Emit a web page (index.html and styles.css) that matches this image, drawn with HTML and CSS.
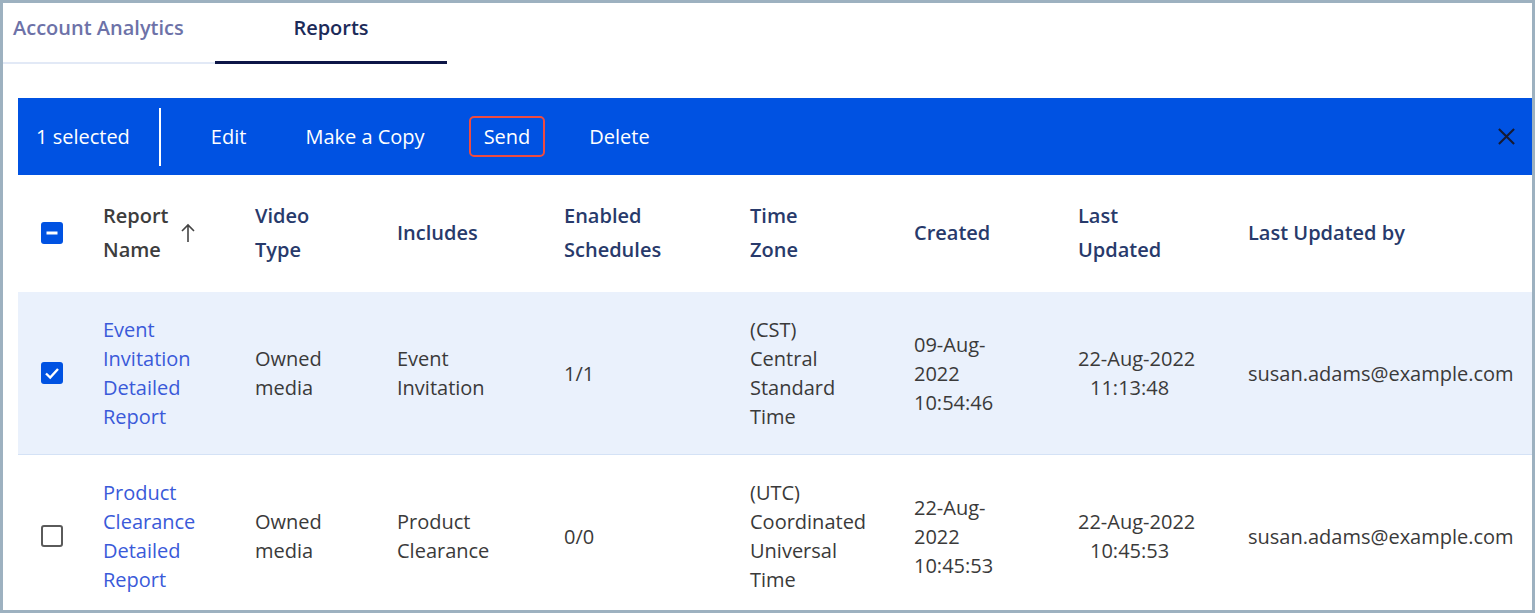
FILE: index.html
```html
<!DOCTYPE html>
<html>
  <head>
    <meta name="viewport" content="width=device-width, initial-scale=1">
    <link rel="stylesheet" href="styles.css">
  </head>
  <body>
    <div class="frame">
      <div class="tabs">
        <div class="tab tab-first">Account Analytics</div>
        <div class="tab active">Reports</div>
      </div>

      <div class="panel">
        <div class="action-bar">
          <span class="count">1 selected</span>
          <span class="divider"></span>
          <div class="bar-actions">
            <span class="bar-btn">Edit</span>
            <span class="bar-btn">Make a Copy</span>
            <span class="bar-btn focused">Send</span>
            <span class="bar-btn">Delete</span>
          </div>
          <svg class="close-btn" viewBox="0 0 20 20">
            <path d="M2 2 L18 18 M18 2 L2 18" stroke="#151a33" stroke-width="2.2" fill="none"/>
          </svg>
        </div>

        <table class="reports">
          <colgroup>
            <col style="width:85px">
            <col style="width:152px">
            <col style="width:142px">
            <col style="width:167px">
            <col style="width:186px">
            <col style="width:164px">
            <col style="width:164px">
            <col style="width:170px">
            <col>
          </colgroup>
          <thead>
            <tr>
              <th>
                <span class="checkbox on">
                  <svg viewBox="0 0 22 22"><rect x="5.5" y="9.5" width="11" height="3" fill="#fff"/></svg>
                </span>
              </th>
              <th>
                <div class="sort-head">
                  <span>Report<br>Name</span>
                  <svg class="sort-arrow" viewBox="0 0 14 20">
                    <path d="M7 2 V19 M1 8 L7 2 L13 8" stroke="#444" stroke-width="1.6" fill="none"/>
                  </svg>
                </div>
              </th>
              <th>Video<br>Type</th>
              <th>Includes</th>
              <th>Enabled<br>Schedules</th>
              <th>Time<br>Zone</th>
              <th>Created</th>
              <th>Last<br>Updated</th>
              <th>Last Updated by</th>
            </tr>
          </thead>
          <tbody>
            <tr class="selected">
              <td>
                <span class="checkbox on">
                  <svg viewBox="0 0 22 22"><path d="M5 11.5 L9.2 15.5 L17 7" stroke="#fff" stroke-width="2.4" fill="none"/></svg>
                </span>
              </td>
              <td><a href="#" class="report-link">Event Invitation Detailed Report</a></td>
              <td>Owned media</td>
              <td>Event Invitation</td>
              <td>1/1</td>
              <td>(CST) Central Standard Time</td>
              <td>09-Aug-2022 10:54:46</td>
              <td><span class="date">22-Aug-2022</span><span class="time">11:13:48</span></td>
              <td>susan.adams@example.com</td>
            </tr>
            <tr>
              <td><span class="checkbox off"></span></td>
              <td><a href="#" class="report-link">Product Clearance Detailed Report</a></td>
              <td>Owned media</td>
              <td>Product Clearance</td>
              <td>0/0</td>
              <td>(UTC) Coordinated Universal Time</td>
              <td>22-Aug-2022 10:45:53</td>
              <td><span class="date">22-Aug-2022</span><span class="time">10:45:53</span></td>
              <td>susan.adams@example.com</td>
            </tr>
          </tbody>
        </table>
      </div>
    </div>
  </body>
</html>
```

FILE: styles.css
```css
body {
  margin: 0;
  font-family: "Open Sans", sans-serif;
  color: #3a3a3a;
  background: #fff;
}

.frame {
  height: 613px;
  box-sizing: border-box;
  border: 3px solid #9db1c0;
  overflow: hidden;
}

/* tabs */
.tabs {
  display: flex;
  align-items: flex-end;
}

.tab {
  font-size: 20px;
  font-weight: 600;
  line-height: 28px;
  padding: 11px 0 19px;
  border-bottom: 3px solid transparent;
  color: #6d72a8;
}

.tab-first {
  width: 202px;
  padding-left: 10px;
  padding-bottom: 20px;
  border-bottom: 2px solid #e2e9f6;
}

.tab.active {
  width: 232px;
  text-align: center;
  color: #1c2b59;
  border-bottom-color: #0d1647;
}

/* selection bar */
.panel {
  margin: 34px 0 0 15px;
}

.action-bar {
  height: 77px;
  background: #0052e2;
  display: flex;
  align-items: center;
  padding-left: 18px;
  color: #fff;
  font-size: 20px;
}

.divider {
  width: 2px;
  height: 58px;
  background: #fff;
  margin: 0 35px 0 29px;
}

.bar-actions {
  display: flex;
  gap: 29px;
}

.bar-btn {
  padding: 0 13px;
  line-height: 37px;
  border: 2px solid transparent;
  border-radius: 5px;
  cursor: pointer;
}

.bar-btn.focused {
  border-color: #ef4b3f;
}

.close-btn {
  margin-left: auto;
  margin-right: 16px;
  width: 19px;
  height: 19px;
}

/* table */
.reports {
  width: 100%;
  border-collapse: collapse;
  table-layout: fixed;
}

.reports th {
  text-align: left;
  font-weight: 600;
  font-size: 20px;
  line-height: 34px;
  color: #283a6b;
  padding: 24px 0 25px;
  vertical-align: middle;
}

.reports td {
  font-size: 20px;
  line-height: 29px;
  padding: 23px 0;
  vertical-align: middle;
}

.reports th:first-child,
.reports td:first-child {
  padding-left: 23px;
}

.reports td:nth-child(2) { padding-right: 30px; }
.reports td:nth-child(3) { padding-right: 24px; }
.reports td:nth-child(4) { padding-right: 40px; }
.reports td:nth-child(5) { padding-right: 40px; }
.reports td:nth-child(6) { padding-right: 48px; }
.reports td:nth-child(7) { padding-right: 64px; }

.reports tbody tr {
  border-bottom: 1px solid #d4e2f6;
}

.reports tr.selected td {
  background: #eaf1fc;
}

.sort-head {
  display: flex;
  align-items: center;
  gap: 12px;
  color: #3d3d3d;
}

.sort-arrow {
  width: 14px;
  height: 20px;
}

.report-link {
  color: #3a5ad9;
  text-decoration: none;
}

.date,
.time {
  display: block;
}

.time {
  padding-left: 12px;
}

.checkbox {
  display: block;
  width: 22px;
  height: 22px;
  box-sizing: border-box;
  border-radius: 3px;
}

.checkbox svg {
  display: block;
  width: 22px;
  height: 22px;
}

.checkbox.on {
  background: #0052e2;
}

.checkbox.off {
  border: 2px solid #5a5a5a;
  background: #fff;
}
```
